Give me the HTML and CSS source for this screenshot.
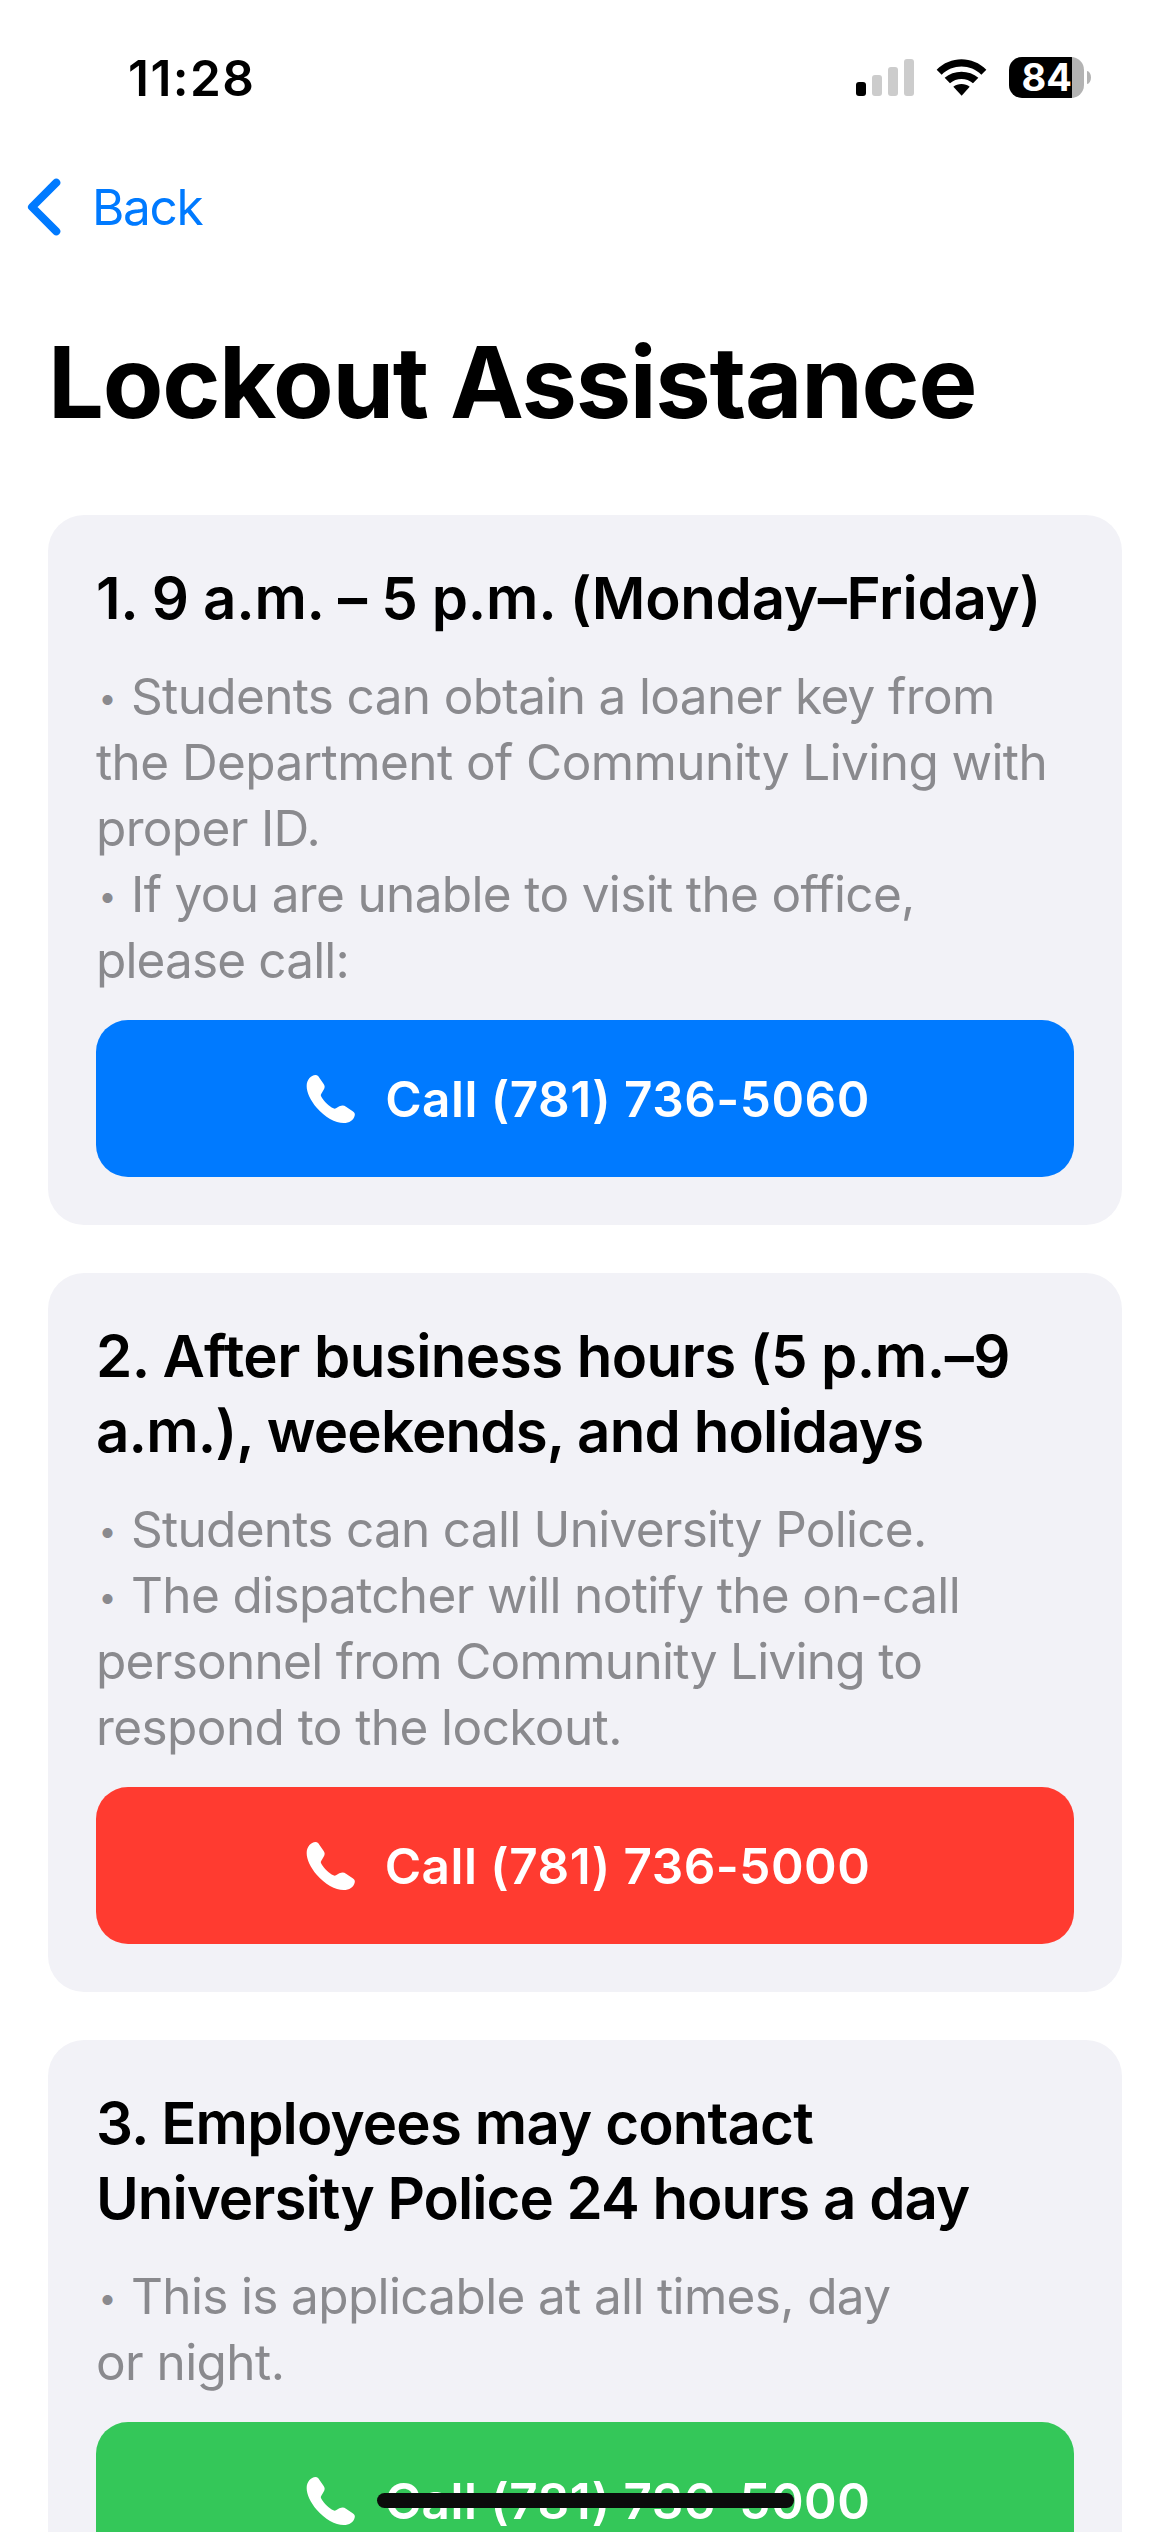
FILE: index.html
```html
<!DOCTYPE html>
<html lang="en">
<head>
<meta charset="utf-8">
<title>Lockout Assistance</title>
<link rel="stylesheet" href="styles.css">
</head>
<body>
<svg class="sprite" aria-hidden="true">
  <symbol id="phone" viewBox="-20 0 177 144">
    <path d="M0 33C0 15 12 0 27 0C32 0 35 3 38 8L51 27C55 33 55 38 51 44L44 56C42 59 42 61 44 65C52 79 67 93 80 100C83 102 85 102 88 100L98 94C107 90 112 91 118 95L137 108C143 112 146 116 144 122C141 135 128 144 111 144C86 144 54 126 30 98C11 76 0 52 0 33Z" fill="#fff"/>
  </symbol>
</svg>

<div class="status-bar">
  <span class="time">11:28</span>
  <div class="indicators">
    <svg class="signal" viewBox="0 0 58 37">
      <rect y="23" width="10" height="14" rx="3"/>
      <g fill="#ccc">
        <rect x="16" y="16" width="10" height="21" rx="3"/>
        <rect x="32" y="8" width="10" height="29" rx="3"/>
        <rect x="48" width="10" height="37" rx="3"/>
      </g>
    </svg>
    <svg class="wifi" viewBox="0 0 151 111">
      <path d="M1 32C42-10 109-10 150 32L135 47C103 14 48 14 16 47Z"/>
      <path d="M25 56C52 32 99 32 126 56L110 73C91 56 60 56 41 73Z"/>
      <path d="M51 83C64 72 87 72 100 83L76 110Z"/>
    </svg>
    <div class="battery">
      <span class="level">84</span>
      <span class="nub"></span>
    </div>
  </div>
</div>

<nav class="nav">
  <svg class="chevron" viewBox="0 0 34 58"><path d="M29.3 4.7L5 29L29.3 53.3"/></svg>
  <span class="back">Back</span>
</nav>

<h1 class="title">Lockout Assistance</h1>

<main class="cards">
  <section class="card">
    <h2 class="heading"><span class="line wide">1. 9 a.m. – 5 p.m. (Monday–Friday)</span></h2>
    <p class="text">
      <span class="line"><span class="bullet">•</span>Students can obtain a loaner key from</span>
      <span class="line loose">the Department of Community Living with</span>
      <span class="line">proper ID.</span>
      <span class="line"><span class="bullet">•</span>If you are unable to visit the office,</span>
      <span class="line tight">please call:</span>
    </p>
    <div class="button blue"><svg class="phone"><use href="#phone"/></svg><span>Call (781) 736-5060</span></div>
  </section>

  <section class="card">
    <h2 class="heading">
      <span class="line medium">2. After business hours (5 p.m.–9</span>
      <span class="line">a.m.), weekends, and holidays</span>
    </h2>
    <p class="text">
      <span class="line snug"><span class="bullet">•</span>Students can call University Police.</span>
      <span class="line"><span class="bullet">•</span>The dispatcher will notify the on-call</span>
      <span class="line snug">personnel from Community Living to</span>
      <span class="line loose">respond to the lockout.</span>
    </p>
    <div class="button red"><svg class="phone"><use href="#phone"/></svg><span>Call (781) 736-5000</span></div>
  </section>

  <section class="card">
    <h2 class="heading">
      <span class="line">3. Employees may contact</span>
      <span class="line narrow">University Police 24 hours a day</span>
    </h2>
    <p class="text">
      <span class="line"><span class="bullet">•</span>This is applicable at all times, day</span>
      <span class="line loose">or night.</span>
    </p>
    <div class="button green"><svg class="phone"><use href="#phone"/></svg><span>Call (781) 736-5000</span></div>
  </section>
</main>

<div class="home-indicator"></div>
</body>
</html>
```
FILE: styles.css
```css
* { box-sizing: border-box; }

html { height: 2532px; overflow: hidden; }

body {
  margin: 0;
  width: 1170px;
  height: 2532px;
  overflow: hidden;
  position: relative;
  background: #fff;
  color: #000;
  font-family: Inter, "Liberation Sans", sans-serif;
  font-size: 49.5px;
}

svg { display: block; flex: none; }

.sprite { position: absolute; width: 0; height: 0; }

/* Status bar */
.status-bar {
  height: 141px;
  padding: 48px 79px 0 128px;
  display: flex;
  justify-content: space-between;
  align-items: flex-start;
}

.time {
  font-weight: 600;
  line-height: 60px;
  letter-spacing: 1.45px;
}

.indicators {
  display: flex;
  align-items: flex-start;
  padding-top: 9px;
}

.signal { width: 58px; height: 37px; margin: 2px 22px 0 0; }
.wifi { width: 51px; height: 37px; margin: 2px 22px 0 0; }

.battery { display: flex; align-items: center; gap: 3px; }

.level {
  width: 75px;
  height: 41px;
  padding-left: 12.5px;
  border-radius: 13px;
  background: linear-gradient(to right, #000 63px, #b3b3b3 63px);
  color: #fff;
  font-size: 38px;
  font-weight: 700;
  line-height: 41px;
}

.nub {
  width: 4px;
  height: 13px;
  border-radius: 0 4px 4px 0 / 0 6.5px 6.5px 0;
  background: #b3b3b3;
}

/* Navigation */
.nav {
  height: 132px;
  padding: 0 0 0 27px;
  display: flex;
  align-items: center;
  color: #007aff;
}

.chevron { width: 34px; height: 58px; margin-right: 31px; }

.chevron path {
  fill: none;
  stroke: #007aff;
  stroke-width: 8;
  stroke-linecap: round;
  stroke-linejoin: round;
}

.back { line-height: 60px; letter-spacing: -1.3px; }

.title {
  margin: 0;
  padding: 49px 48px 0;
  height: 242px;
  font-size: 99px;
  font-weight: 700;
  line-height: 120px;
  letter-spacing: -1.28px;
}

/* Cards */
.cards {
  padding: 0 48px;
  display: flex;
  flex-direction: column;
  gap: 48px;
}

.card {
  padding: 46px 48px 48px;
  border-radius: 36px;
  background: #f2f2f7;
  display: flex;
  flex-direction: column;
  gap: 27px;
}

.line { display: block; white-space: nowrap; }

.heading {
  margin: 0;
  font-size: 58.2px;
  font-weight: 600;
  line-height: 75px;
  letter-spacing: -0.85px;
}

.heading .wide { letter-spacing: -0.29px; }
.heading .medium { letter-spacing: -0.55px; }
.heading .narrow { letter-spacing: -0.97px; }

.text {
  margin: 0;
  color: #8a8a8e;
  line-height: 66px;
  letter-spacing: -0.65px;
}

.text .loose { letter-spacing: -0.58px; }
.text .snug { letter-spacing: -0.72px; }
.text .tight { letter-spacing: -0.86px; }

.bullet {
  display: inline-block;
  width: 35px;
  padding-left: 2.5px;
  font-size: 32px;
  line-height: 0;
  vertical-align: 5px;
}

.button {
  height: 157px;
  border-radius: 32px;
  display: flex;
  align-items: center;
  justify-content: center;
  gap: 26px;
  color: #fff;
  font-weight: 600;
  line-height: 60px;
  letter-spacing: 0.47px;
}

.blue { background: #007aff; }
.red { background: #ff3b30; }
.green { background: #34c759; }

.phone { width: 59px; height: 48px; }

.home-indicator {
  position: absolute;
  left: 377px;
  top: 2493px;
  width: 417px;
  height: 15px;
  border-radius: 8px;
  background: #0b0b0b;
}
```
